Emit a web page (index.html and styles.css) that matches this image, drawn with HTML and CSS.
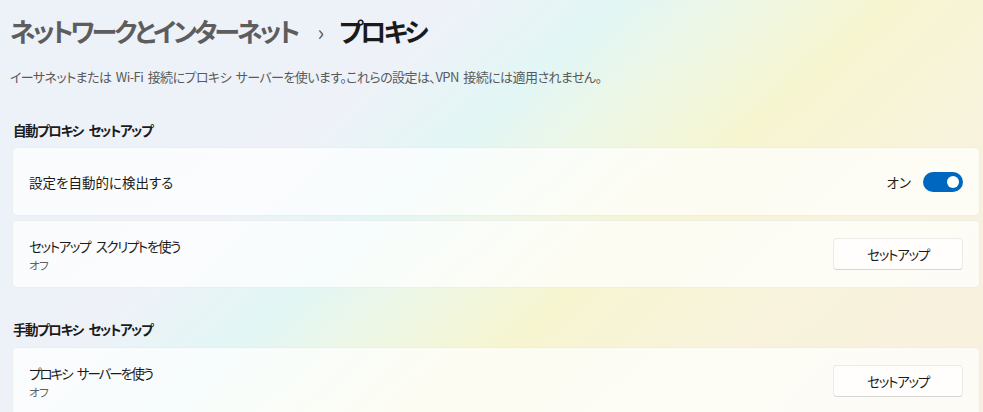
FILE: index.html
```html
<!DOCTYPE html>
<html lang="ja">
<head>
<meta charset="utf-8">
<link rel="stylesheet" href="styles.css">
</head>
<body>
<main class="page">
  <h1 class="title"><span class="crumb">ネットワークとインターネット</span><span class="sep">›</span><span class="current">プロキシ</span></h1>
  <p class="desc">イーサネットまたは Wi-Fi 接続にプロキシ サーバーを使います。これらの設定は、VPN 接続には適用されません。</p>

  <h2 class="section">自動プロキシ セットアップ</h2>
  <div class="card card-tall">
    <div class="label"><div class="name">設定を自動的に検出する</div></div>
    <div class="control">
      <span class="state">オン</span>
      <span class="toggle"><span class="knob"></span></span>
    </div>
  </div>
  <div class="card">
    <div class="label"><div class="name name-kana">セットアップ スクリプトを使う</div><div class="sub">オフ</div></div>
    <button class="btn">セットアップ</button>
  </div>

  <h2 class="section section-2">手動プロキシ セットアップ</h2>
  <div class="card">
    <div class="label"><div class="name name-kana2">プロキシ サーバーを使う</div><div class="sub">オフ</div></div>
    <button class="btn">セットアップ</button>
  </div>
</main>
</body>
</html>
```
FILE: styles.css
```css
html, body {
  margin: 0;
  height: 100%;
}
body {
  font-family: "Noto Sans CJK JP", "Noto Sans", sans-serif;
  font-feature-settings: "palt";
  color: #1b1b1b;
  background: linear-gradient(138deg, #edf1f8 0%, #eef2f8 32%, #e2f6f5 43%, #eef7e4 52%, #f6f5d0 62%, #f8f3dc 76%, #f7f0de 100%);
  overflow: hidden;
}
.page {
  padding: 11px 3px 0 12px;
}
.title {
  margin: 0 0 16px -2px;
  height: 40px;
  line-height: 40px;
  font-size: 26px;
  font-weight: 600;
  letter-spacing: -3px;
  display: flex;
  align-items: center;
}
.crumb {
  color: #5d5d5d;
}
.sep {
  color: #5d5d5d;
  font-size: 22px;
  font-weight: 400;
  letter-spacing: 0;
  margin: 0 15px 0 20px;
}
.current {
  color: #1a1a1a;
}
.desc {
  margin: 0 0 33px -2px;
  font-size: 13px;
  line-height: 20px;
  letter-spacing: -0.55px;
  word-spacing: 2px;
  color: #5a5a5a;
}
.section {
  margin: 0 0 7px 1px;
  font-size: 13.5px;
  font-weight: 600;
  line-height: 20px;
  letter-spacing: -1.4px;
  word-spacing: 4px;
  color: #1b1b1b;
}
.section-2 {
  margin-top: 31px;
  margin-bottom: 8px;
}
.card {
  box-sizing: border-box;
  height: 68px;
  margin-bottom: 4px;
  padding: 0 16px;
  border: 1px solid rgba(0, 0, 0, 0.06);
  border-radius: 5px;
  background: rgba(255, 255, 255, 0.72);
  display: flex;
  align-items: center;
  justify-content: space-between;
}
.card-tall {
  height: 69px;
}
.name {
  font-size: 13.5px;
  line-height: 20px;
  color: #1b1b1b;
}
.name-kana {
  letter-spacing: -1.4px;
  word-spacing: 4px;
}
.name-kana2 {
  letter-spacing: -2px;
  word-spacing: 4px;
}
.sub {
  font-size: 11.5px;
  line-height: 16px;
  letter-spacing: -0.5px;
  color: #606060;
  margin-top: 1px;
}
.control {
  display: flex;
  align-items: center;
  gap: 12px;
}
.state {
  font-size: 13.5px;
  color: #1b1b1b;
}
.toggle {
  width: 40px;
  height: 20px;
  border-radius: 10px;
  background: #0067c0;
  display: flex;
  align-items: center;
  justify-content: flex-end;
  padding-right: 4px;
  box-sizing: border-box;
}
.knob {
  width: 12px;
  height: 12px;
  border-radius: 50%;
  background: #ffffff;
}
.btn {
  box-sizing: border-box;
  width: 130px;
  height: 32px;
  font-family: inherit;
  font-feature-settings: "palt";
  font-size: 13.5px;
  letter-spacing: -1.3px;
  color: #1b1b1b;
  background: rgba(255, 255, 255, 0.75);
  border: 1px solid rgba(0, 0, 0, 0.08);
  border-bottom-color: rgba(0, 0, 0, 0.16);
  border-radius: 4px;
  padding: 0;
}
```
